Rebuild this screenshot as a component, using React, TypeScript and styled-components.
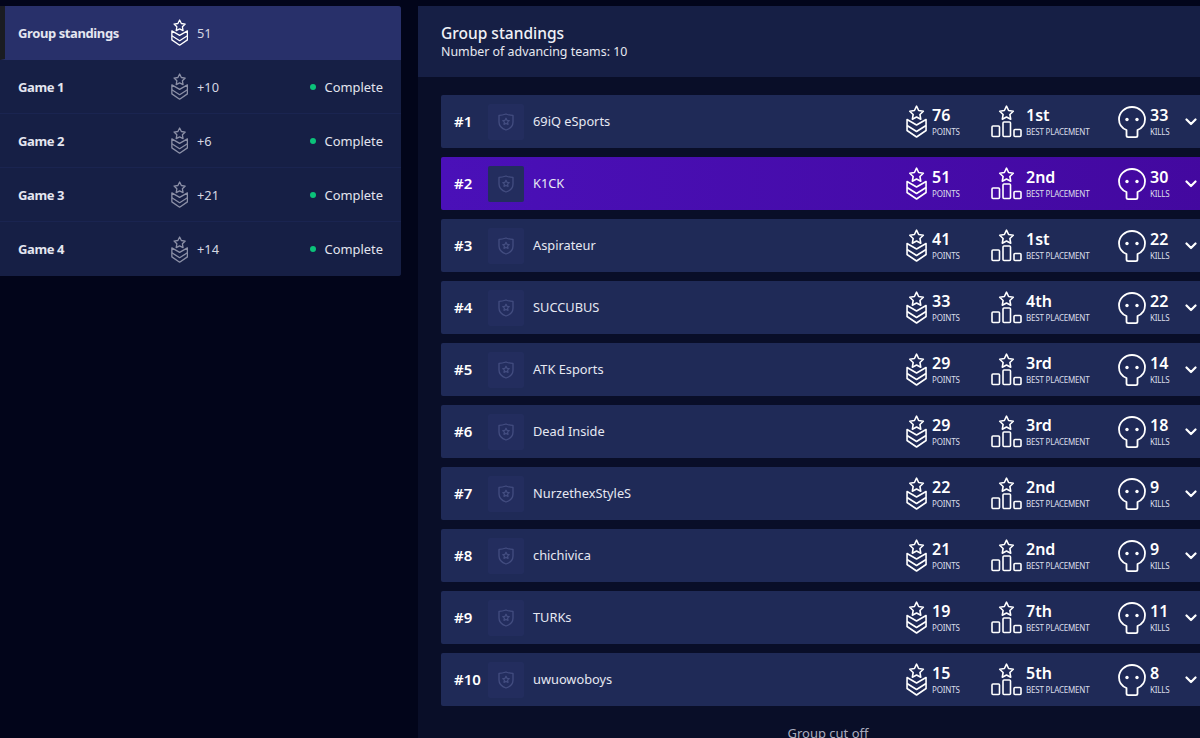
import styled, { createGlobalStyle } from 'styled-components';

interface Team {
  name: string;
  points: number;
  placement: string;
  kills: number;
}

const games = [
  { name: 'Game 1', score: '+10' },
  { name: 'Game 2', score: '+6' },
  { name: 'Game 3', score: '+21' },
  { name: 'Game 4', score: '+14' },
];

const teams: Team[] = [
  { name: '69iQ eSports', points: 76, placement: '1st', kills: 33 },
  { name: 'K1CK', points: 51, placement: '2nd', kills: 30 },
  { name: 'Aspirateur', points: 41, placement: '1st', kills: 22 },
  { name: 'SUCCUBUS', points: 33, placement: '4th', kills: 22 },
  { name: 'ATK Esports', points: 29, placement: '3rd', kills: 14 },
  { name: 'Dead Inside', points: 29, placement: '3rd', kills: 18 },
  { name: 'NurzethexStyleS', points: 22, placement: '2nd', kills: 9 },
  { name: 'chichivica', points: 21, placement: '2nd', kills: 9 },
  { name: 'TURKs', points: 19, placement: '7th', kills: 11 },
  { name: 'uwuowoboys', points: 15, placement: '5th', kills: 8 },
];

const STAR = 'M10 1.2l2.1 4.3 4.7.7-3.4 3.3.8 4.7-4.2-2.2-4.2 2.2.8-4.7-3.4-3.3 4.7-.7z';

function BadgeIcon({ size }: { size: number }) {
  return (
    <svg width={size * 0.64} height={size} viewBox="0 0 21 33" fill="none" stroke="currentColor" strokeWidth="1.6" strokeLinejoin="round">
      <g transform="translate(0.5 0)">
        <path d={STAR} />
      </g>
      <path d="M1 14.500l9.500 5.500 9.500-5.500v11l-9.500 6.500-9.500-6.500z" />
      <path d="M1 20.500l9.500 6 9.500-6" />
    </svg>
  );
}

function PodiumIcon() {
  return (
    <svg width="31" height="33" viewBox="0 0 31 33" fill="none" stroke="currentColor" strokeWidth="1.6" strokeLinejoin="round">
      <g transform="translate(5.500 0)">
        <path d={STAR} />
      </g>
      <rect x="1" y="21" width="7.500" height="10.500" rx="1" />
      <rect x="12" y="17" width="7.500" height="14.500" rx="1" />
      <rect x="23" y="24.500" width="7" height="7" rx="1" />
    </svg>
  );
}

function SkullIcon() {
  return (
    <svg width="28" height="32" viewBox="0 0 28 32" fill="none" stroke="currentColor" strokeWidth="1.8" strokeLinejoin="round">
      <path d="M14 1C6.800 1 1 6.500 1 13.200c0 4.800 2.900 8.900 7.500 10.800v5.500a1.600 1.600 0 0 0 1.600 1.600h7.800a1.600 1.600 0 0 0 1.600-1.600V24c4.600-1.900 7.500-6 7.500-10.800C27 6.500 21.200 1 14 1z" />
      <circle cx="9" cy="13.500" r="1.700" fill="currentColor" stroke="none" />
      <circle cx="19" cy="13.500" r="1.700" fill="currentColor" stroke="none" />
    </svg>
  );
}

function ShieldIcon() {
  return (
    <svg width="16" height="18" viewBox="0 0 16 18" fill="none" stroke="#434d80" strokeWidth="1.300" strokeLinejoin="round">
      <path d="M1 2.400C3.500 2.400 5.800 1.800 8 1c2.200.8 4.500 1.400 7 1.400V9c0 4-3 6.700-7 8-4-1.300-7-4-7-8z" />
      <path d="M8 5.300l1 2 2.200.3-1.600 1.500.4 2.200-2-1-2 1 .4-2.200-1.600-1.500 2.200-.3z" />
    </svg>
  );
}

function Chevron() {
  return (
    <svg width="12" height="8" viewBox="0 0 12 8" fill="none" stroke="currentColor" strokeWidth="2.200" strokeLinecap="round" strokeLinejoin="round">
      <path d="M1.500 1.500L6 6l4.500-4.500" />
    </svg>
  );
}

export default function App() {
  return (
    <>
      <GlobalStyle />
      <Page>
        <Sidebar>
          <SideRow $active>
            <SideName>Group standings</SideName>
            <SideIcon $active>
              <BadgeIcon size={27} />
            </SideIcon>
            <SideScore>51</SideScore>
          </SideRow>
          {games.map(game => (
            <SideRow key={game.name}>
              <SideName>{game.name}</SideName>
              <SideIcon>
                <BadgeIcon size={27} />
              </SideIcon>
              <SideScore>{game.score}</SideScore>
              <Status>
                <StatusDot />
                Complete
              </Status>
            </SideRow>
          ))}
        </Sidebar>
        <Main>
          <Header>
            <Title>Group standings</Title>
            <Subtitle>Number of advancing teams: 10</Subtitle>
          </Header>
          <TeamList>
            {teams.map((team, idx) => (
              <TeamRow key={team.name} $active={team.name === 'K1CK'}>
                <Rank>#{idx + 1}</Rank>
                <Logo>
                  <ShieldIcon />
                </Logo>
                <TeamName>{team.name}</TeamName>
                <Stat $width={85} $gap={5}>
                  <BadgeIcon size={33} />
                  <StatText>
                    <StatValue>{team.points}</StatValue>
                    <StatLabel>Points</StatLabel>
                  </StatText>
                </Stat>
                <Stat $width={127} $gap={4}>
                  <PodiumIcon />
                  <StatText>
                    <StatValue>{team.placement}</StatValue>
                    <StatLabel>Best placement</StatLabel>
                  </StatText>
                </Stat>
                <Stat $width={67} $gap={4}>
                  <SkullIcon />
                  <StatText>
                    <StatValue>{team.kills}</StatValue>
                    <StatLabel>Kills</StatLabel>
                  </StatText>
                </Stat>
                <Chevron />
              </TeamRow>
            ))}
          </TeamList>
          <CutOff>Group cut off</CutOff>
        </Main>
      </Page>
    </>
  );
}

const GlobalStyle = createGlobalStyle`
  html, body {
    margin: 0;
    height: 100%;
    overflow: hidden;
    background: #02051a;
  }
  body {
    font-family: "Noto Sans", "Open Sans", sans-serif;
    color: #fff;
  }
`;

const Page = styled.div`
  display: flex;
  align-items: flex-start;
  gap: 17px;
  width: 1238px;
  height: 738px;
  padding-top: 6px;
  box-sizing: border-box;
  overflow: hidden;
`;

const Sidebar = styled.div`
  flex: none;
  width: 401px;
  border-radius: 0 3px 3px 0;
  overflow: hidden;
  background: #161f45;
`;

const SideRow = styled.div<{ $active?: boolean }>`
  display: flex;
  align-items: center;
  height: 54px;
  box-sizing: border-box;
  padding: 0 18px 0 ${p => (p.$active ? 13 : 18)}px;
  background: ${p => (p.$active ? '#28306a' : '#161f45')};
  border-left: ${p => (p.$active ? '5px solid #1a1c22' : 'none')};
  border-bottom: 1px solid ${p => (p.$active ? '#28306a' : '#1a2450')};

  &:last-child {
    border-bottom: none;
  }
`;

const SideName = styled.div`
  width: 153px;
  font-size: 13px;
  font-weight: 700;
  letter-spacing: -0.4px;
  color: #e4e6f0;
`;

const SideIcon = styled.div<{ $active?: boolean }>`
  display: flex;
  width: 26px;
  color: ${p => (p.$active ? '#ffffff' : '#8b8fa6')};
`;

const SideScore = styled.div`
  font-size: 12.800px;
  color: #d5d7e2;
`;

const Status = styled.div`
  display: flex;
  align-items: center;
  gap: 9px;
  margin-left: auto;
  font-size: 12.900px;
  color: #e2e4ee;
`;

const StatusDot = styled.span`
  width: 6px;
  height: 6px;
  border-radius: 50%;
  background: #0bc27a;
`;

const Main = styled.div`
  flex: none;
  width: 820px;
  height: 732px;
  background: #090e28;
`;

const Header = styled.div`
  height: 71px;
  box-sizing: border-box;
  padding: 17px 23px 0;
  background: #161f45;
`;

const Title = styled.div`
  font-size: 15.500px;
  font-weight: 500;
  line-height: 20px;
  color: #f0f1f6;
`;

const Subtitle = styled.div`
  font-size: 12.400px;
  line-height: 17px;
  color: #e6e8f0;
`;

const TeamList = styled.div`
  display: flex;
  flex-direction: column;
  gap: 9px;
  padding: 18px 23px 0;
`;

const TeamRow = styled.div<{ $active?: boolean }>`
  display: flex;
  align-items: center;
  height: 53px;
  padding: 0 18px 0 13px;
  border-radius: 2px;
  background: ${p => (p.$active ? 'linear-gradient(90deg, #4a10b8, #43089f)' : '#1f2a57')};
`;

const Rank = styled.div`
  width: 34px;
  padding-bottom: 1px;
  font-size: 15px;
  font-weight: 600;
  white-space: nowrap;
`;

const Logo = styled.div`
  display: flex;
  align-items: center;
  justify-content: center;
  width: 36px;
  height: 36px;
  border-radius: 2px;
  background: #232d5e;
`;

const TeamName = styled.div`
  flex: 1;
  margin-left: 9px;
  padding-bottom: 1px;
  font-size: 12.800px;
  color: #e6e8f2;
`;

const Stat = styled.div<{ $width: number; $gap: number }>`
  display: flex;
  align-items: center;
  gap: ${p => p.$gap}px;
  width: ${p => p.$width}px;
`;

const StatText = styled.div`
  display: flex;
  flex-direction: column;
  padding-top: 2px;
`;

const StatValue = styled.span`
  font-size: 16px;
  font-weight: 600;
  line-height: 19px;
`;

const StatLabel = styled.span`
  font-size: 8px;
  line-height: 14px;
  letter-spacing: -0.2px;
  text-transform: uppercase;
  color: #dcdeea;
  white-space: nowrap;
`;

const CutOff = styled.div`
  margin-top: 18px;
  text-align: center;
  font-size: 13px;
  color: #a9acbd;
`;
